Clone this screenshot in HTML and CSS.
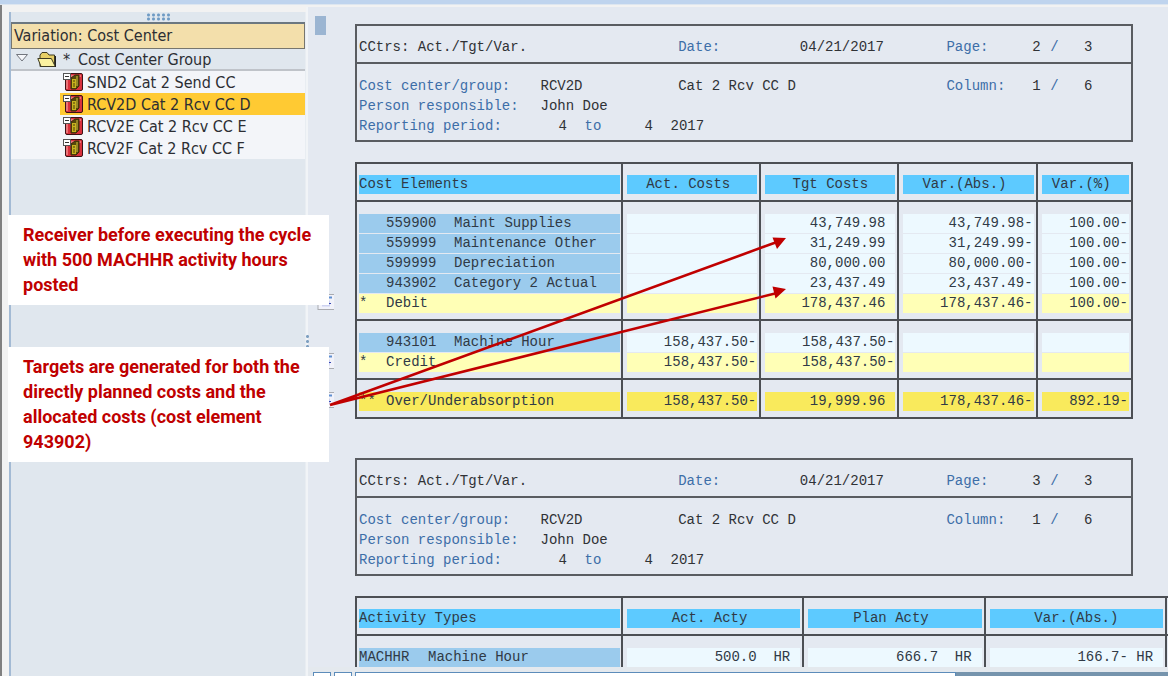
FILE: index.html
```html
<!DOCTYPE html>
<html lang="en">
<head>
<meta charset="utf-8">
<title>Cost Center Report</title>
<link rel="stylesheet" href="styles.css">
</head>
<body>
<svg class="defs" aria-hidden="true">
  <symbol id="cc" viewBox="0 0 20 20">
    <rect x="2.5" y="1.500" width="17" height="17" rx="1.500" fill="#d9303c" stroke="#3c1216"/>
    <path d="M4 17V4h14" fill="none" stroke="#f08a8c" stroke-width="1.500"/>
    <path d="M8 6l4-3h4v11l-3 3H8z" fill="#55470a" stroke="#3c2c08"/>
    <path d="M9 7h4v9H9z" fill="#c8b41e"/>
    <path d="M10 9h2M10 12h2M10 14h2" stroke="#4a3b08"/>
    <path d="M14 4v10" stroke="#d8c840"/>
    <rect x=".5" y="1.500" width="7" height="6" fill="#fff" stroke="#555"/>
    <path d="M2 4.500h4" stroke="#333"/>
  </symbol>
  <symbol id="note" viewBox="0 0 17 17">
    <rect x="1" y="1" width="16" height="15" fill="#f1f2fa"/>
    <path d="M1 .5h16M1 15.500h16M1 0v16" stroke="#a9abb0" fill="none"/>
    <path d="M5 3.500h10" stroke="#5e8fd0" stroke-width="2"/>
    <path d="M5 9.500h8" stroke="#cdd2f0" stroke-width="6"/>
    <path d="M11 9.500h3" stroke="#3446b4"/>
  </symbol>
</svg>
<div class="strip"></div>
<div class="window">
  <aside class="side">
    <div class="grip"><span class="dots"></span></div>
    <div class="side-title">Variation: Cost Center</div>
    <div class="group">
      <svg class="tri" viewBox="0 0 14 10"><path d="M1.500 1.500h11L7 8z" fill="#f4f6fa" stroke="#72767e"/></svg>
      <svg class="folder" viewBox="0 0 20 17"><path d="M3 15.500V4l2-2.500h5L12 4h5.500v11.500z" fill="#e6cf66" stroke="#3d3a22"/><path d="M.8 7.500h13.500l4 8H4z" fill="#fbf2a0" stroke="#3d3a22"/><path d="M18.500 5v11" stroke="#222"/></svg>
      <span class="star">*</span><span>Cost Center Group</span>
    </div>
    <ul class="nodes">
      <li><button type="button"><svg><use href="#cc"/></svg>SND2 Cat 2 Send CC</button></li>
      <li><button type="button" class="sel"><svg><use href="#cc"/></svg>RCV2D Cat 2 Rcv CC D</button></li>
      <li><button type="button"><svg><use href="#cc"/></svg>RCV2E Cat 2 Rcv CC E</button></li>
      <li><button type="button"><svg><use href="#cc"/></svg>RCV2F Cat 2 Rcv CC F</button></li>
    </ul>
  </aside>
  <main class="main">
    <div class="report">
      <section class="head">
        <div class="line top"><b>CCtrs: Act./Tgt/Var.</b><i class="c3">Date:</i><b>04/21/2017</b><i>Page:</i><b>2</b><i>/</i><b>3</b></div>
        <div class="info">
          <div class="line"><i>Cost center/group:</i><b>RCV2D</b><b class="wide">Cat 2 Rcv CC D</b><i>Column:</i><b>1</b><i>/</i><b>6</b></div>
          <div class="line"><i>Person responsible:</i><b>John Doe</b></div>
          <div class="line"><i>Reporting period:</i><span class="period"><b>4</b><i>to</i><b>4</b><b>2017</b></span></div>
        </div>
      </section>
      <table class="grid costs">
        <colgroup><col class="k1"><col class="k2"><col class="k2"><col class="k2"><col class="k3"></colgroup>
        <thead><tr><th><div>Cost Elements</div></th><th><div class="lean">Act. Costs</div></th><th><div>Tgt Costs</div></th><th><div class="lean">Var.(Abs.)</div></th><th><div class="lean">Var.(%)</div></th></tr></thead>
        <tbody>
          <tr><td><div class="key"><span></span><span>559900</span><span>Maint Supplies</span></div></td><td><div></div></td><td><div class="pos">43,749.98</div></td><td><div>43,749.98-</div></td><td><div>100.00-</div></td></tr>
          <tr><td><div class="key"><span></span><span>559999</span><span>Maintenance Other</span></div></td><td><div></div></td><td><div class="pos">31,249.99</div></td><td><div>31,249.99-</div></td><td><div>100.00-</div></td></tr>
          <tr><td><div class="key"><span></span><span>599999</span><span>Depreciation</span></div></td><td><div></div></td><td><div class="pos">80,000.00</div></td><td><div>80,000.00-</div></td><td><div>100.00-</div></td></tr>
          <tr><td><div class="key"><span></span><span>943902</span><span>Category 2 Actual</span></div></td><td><div></div></td><td><div class="pos">23,437.49</div></td><td><div>23,437.49-</div></td><td><div>100.00-</div></td></tr>
          <tr class="sub"><td><div class="key"><span>*</span><span>Debit</span></div></td><td><div></div></td><td><div class="pos">178,437.46</div></td><td><div>178,437.46-</div></td><td><div>100.00-</div></td></tr>
        </tbody>
        <tbody>
          <tr><td><div class="key"><span></span><span>943101</span><span>Machine Hour</span></div></td><td><div>158,437.50-</div></td><td><div>158,437.50-</div></td><td><div></div></td><td><div></div></td></tr>
          <tr class="sub"><td><div class="key"><span>*</span><span>Credit</span></div></td><td><div>158,437.50-</div></td><td><div>158,437.50-</div></td><td><div></div></td><td><div></div></td></tr>
        </tbody>
        <tbody>
          <tr class="total"><td><div class="key"><span>**</span><span>Over/Underabsorption</span></div></td><td><div>158,437.50-</div></td><td><div class="pos">19,999.96</div></td><td><div>178,437.46-</div></td><td><div>892.19-</div></td></tr>
        </tbody>
      </table>
      <section class="head">
        <div class="line top"><b>CCtrs: Act./Tgt/Var.</b><i class="c3">Date:</i><b>04/21/2017</b><i>Page:</i><b>3</b><i>/</i><b>3</b></div>
        <div class="info">
          <div class="line"><i>Cost center/group:</i><b>RCV2D</b><b class="wide">Cat 2 Rcv CC D</b><i>Column:</i><b>1</b><i>/</i><b>6</b></div>
          <div class="line"><i>Person responsible:</i><b>John Doe</b></div>
          <div class="line"><i>Reporting period:</i><span class="period"><b>4</b><i>to</i><b>4</b><b>2017</b></span></div>
        </div>
      </section>
      <table class="grid acts">
        <colgroup><col class="a1"><col class="a2"><col class="a2"><col class="a2"><col></colgroup>
        <thead><tr><th><div>Activity Types</div></th><th><div class="lean">Act. Acty</div></th><th><div class="lean">Plan Acty</div></th><th><div>Var.(Abs.)</div></th><th></th></tr></thead>
        <tbody><tr><td><div class="key two"><span>MACHHR</span><span>Machine Hour</span></div></td><td><div class="pos">500.0&nbsp; HR</div></td><td><div class="pos">666.7&nbsp; HR</div></td><td><div class="pos">166.7- HR</div></td><td></td></tr></tbody>
      </table>
    </div>
    <div class="hbar"><button type="button" aria-label="Scroll left"></button><button type="button" aria-label="Scroll right"></button><span class="track"></span><span class="rest"></span></div>
    <span class="thumb"></span>
    <span class="vdots"></span>
    <svg class="note n1"><use href="#note"/></svg>
    <svg class="note n2"><use href="#note"/></svg>
    <svg class="note n3"><use href="#note"/></svg>
  </main>
</div>
<p class="callout first">Receiver before executing the cycle with 500 MACHHR activity hours posted</p>
<p class="callout second">Targets are generated for both the directly planned costs and the allocated costs (cost element 943902)</p>
<svg class="arrows" viewBox="0 0 470 180" aria-hidden="true">
  <path d="M1 175L448 12M1 175L448 63" stroke="#c00000" stroke-width="2.600" fill="none"/>
  <path d="M457 8L443.500 7.500L448 19zM457 59L443.500 56.500L446.500 68.500z" fill="#c00000"/>
</svg>
</body>
</html>
```
FILE: styles.css
```css
* { box-sizing: border-box; }
body {
  margin: 0;
  height: 100vh;
  display: flex;
  flex-direction: column;
  overflow: hidden;
  position: relative;
  background: #f2f2f2;
  font-family: "DejaVu Sans Condensed", "Noto Sans", sans-serif;
  font-size: 16px;
  color: #2c2e33;
}
.defs { position: absolute; width: 0; height: 0; }
.strip { height: 5px; background: #bfd4ee; border-bottom: 1px solid #dde6f0; flex: none; }
.window {
  flex: 1;
  min-height: 0;
  display: grid;
  grid-template-columns: 297px 1fr;
  padding-left: 7px;
  border-left: 2px solid #808080;
}

/* navigation tree */
.side { margin-top: 7px; border-left: 2px solid #a3bad4; background: #e0e7ee; border-right: 1px solid #e8edf2; }
.grip { height: 10px; display: flex; justify-content: center; align-items: center; }
.dots { width: 25px; height: 8px; background: radial-gradient(circle, #6f9bc4 1px, transparent 2px) 0 0 / 5px 4px; }
.side-title {
  height: 27px;
  line-height: 24px;
  padding-left: 2px;
  border: 1px solid #77766e;
  border-top: 2px solid #6b7780;
  background: #f3dfab;
}
.group { height: 22px; display: flex; align-items: center; padding: 1px 0 0 4px; border-bottom: 2px solid #bfc3c9; }
.tri { width: 14px; height: 10px; margin: 0 8px 4px 0; }
.folder { width: 20px; height: 17px; margin-right: 6px; }
.star { width: 15px; }
.nodes { margin: 0; padding: 0 0 0 49px; list-style: none; background: #f3f5f9; }
.nodes button {
  display: flex;
  align-items: center;
  gap: 4px;
  width: 100%;
  height: 22px;
  padding: 0 0 0 3px;
  border: 0;
  background: none;
  font: inherit;
  color: inherit;
}
.nodes .sel { background: #ffca33; }
.nodes svg { width: 20px; height: 20px; }

/* report area */
.main {
  position: relative;
  min-width: 0;
  min-height: 0;
  margin-top: 2px;
  display: flex;
  flex-direction: column;
  background: #e4e9f1;
  border-left: 2px solid #f1f4f7;
}
.report {
  flex: 1;
  min-height: 0;
  overflow: hidden;
  padding: 17px 35px 0 47px;
  font-family: "Liberation Mono", monospace;
  font-size: 14px;
  line-height: 19px;
}
.report b, .report i { font-weight: normal; font-style: normal; }
.report b { color: #303236; }
.report i { color: #3d6ea8; }
.head { border: 2px solid #595c61; }
.line {
  display: grid;
  grid-template-columns: 182fr 138fr 122fr 147fr 86fr 18fr 34fr 47fr;
  padding-left: 2px;
  line-height: 20px;
  white-space: nowrap;
}
.line.top { padding-top: 11px; padding-bottom: 5px; border-bottom: 2px solid #595c61; }
.c3 { grid-column: 3; }
.wide { grid-column: span 2; }
.info { padding: 12px 0 4px; }
.period { display: grid; grid-template-columns: 26px 60px 26px auto; padding-left: 18px; grid-column: 2 / 5; justify-content: start; }

.grid { width: 100%; margin-top: 20px; table-layout: fixed; border-collapse: collapse; border: 2px solid #4c4f54; }
.grid + .head { margin-top: 39px; }
.k1 { width: 34.3%; }
.k2 { width: 17.8%; }
.acts { width: calc(100% + 60px); }
.a1 { width: 31.8%; }
.a2 { width: 21.7%; }
.grid thead, .grid tbody { border-bottom: 2px solid #4c4f54; }
.grid th, .grid td { padding: 0 2px 1px 4px; font-weight: normal; border-right: 2px solid #4c4f54; color: #303a46; }
.grid th:first-child, .grid td:first-child { padding-left: 2px; padding-right: 1px; }
.grid thead tr > * { padding-top: 11px; padding-bottom: 6px; }
.grid tbody tr:first-child > * { padding-top: 12px; }
.grid tbody tr:last-child > * { padding-bottom: 6px; }
.grid div { height: 19px; white-space: nowrap; }
.grid th div { background: #5dcaff; }
.grid th:first-child div { text-align: left; }
.grid td div { background: #edf9ff; text-align: right; padding-right: 1px; }
.grid th .lean { padding-right: 8px; }
.grid td .pos { padding-right: 10px; }
.grid td .key { display: grid; grid-template-columns: 27px 68px auto; justify-content: start; text-align: left; background: #9bcbed; }
.grid td .two { grid-template-columns: 69px auto; }
.grid .sub div, .grid .sub .key { background: #ffffb6; }
.grid .total div, .grid .total .key { background: #f9ea5c; }

.hbar { flex: none; height: 9px; padding: 5px 0 0 5px; display: flex; gap: 3px; background: #e4e9ee; }
.hbar button, .track { width: 18px; padding: 0; border: 1px solid #5c8cba; border-bottom: 0; background: #fff; }
.track { flex: 600; }
.rest { flex: 213; margin-left: -3px; background: #7694ad; }
.thumb { position: absolute; left: 7px; top: 9px; width: 11px; height: 19px; background: #9bb5d2; }
.vdots { position: absolute; left: -3px; top: 327px; width: 5px; height: 20px; background: radial-gradient(circle, #7d9fc0 1px, transparent 2px) 0 0 / 5px 5px; }
.note { position: absolute; left: 9px; width: 17px; height: 17px; }
.n1 { top: 287px; }
.n2 { top: 346px; }
.n3 { top: 385px; }

/* annotations over the report */
.callout {
  position: absolute;
  left: 8px;
  width: 321px;
  margin: 0;
  padding: 7px 6px 8px 15px;
  background: #fff;
  color: #c00000;
  font: bold 18px/25px Roboto, sans-serif;
}
.first { top: 215px; }
.second { top: 347px; }
.arrows { position: absolute; left: 329px; top: 230px; width: 470px; height: 180px; }
```
